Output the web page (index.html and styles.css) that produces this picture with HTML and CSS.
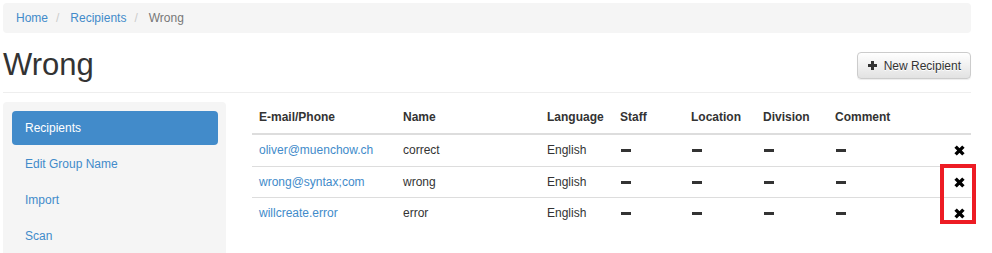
FILE: index.html
```html
<!DOCTYPE html>
<html>
<head>
<meta charset="utf-8">
<title>Wrong</title>
<link rel="stylesheet" href="styles.css">
</head>
<body>
<div class="page">
  <ol class="breadcrumb">
    <li><a href="#">Home</a></li>
    <li class="sep">/</li>
    <li><a href="#">Recipients</a></li>
    <li class="sep">/</li>
    <li class="current">Wrong</li>
  </ol>

  <div class="page-header">
    <h1>Wrong</h1>
    <button class="btn">
      <svg class="icon-plus" width="9" height="9" viewBox="0 0 9 9"><rect x="0" y="3" width="9" height="3" fill="#333"/><rect x="3" y="0" width="3" height="9" fill="#333"/></svg>
      <span>New Recipient</span>
    </button>
  </div>

  <div class="main">
    <nav class="sidebar">
      <a class="nav-item active" href="#">Recipients</a>
      <a class="nav-item" href="#">Edit Group Name</a>
      <a class="nav-item" href="#">Import</a>
      <a class="nav-item" href="#">Scan</a>
    </nav>

    <table class="table">
      <colgroup>
        <col class="c-email"><col class="c-name"><col class="c-lang"><col class="c-staff"><col class="c-loc"><col class="c-div"><col class="c-comment"><col class="c-action">
      </colgroup>
      <thead>
        <tr><th>E-mail/Phone</th><th>Name</th><th>Language</th><th>Staff</th><th>Location</th><th>Division</th><th>Comment</th><th></th></tr>
      </thead>
      <tbody>
        <tr>
          <td><a href="#">oliver@muenchow.ch</a></td><td>correct</td><td>English</td>
          <td><span class="dash"></span></td><td><span class="dash"></span></td><td><span class="dash"></span></td><td><span class="dash"></span></td>
          <td class="action"><svg width="11" height="11" viewBox="0 0 11 11"><path d="M1.6 1.6L9.4 9.4M9.4 1.6L1.6 9.4" stroke="#000" stroke-width="3.4"/></svg></td>
        </tr>
        <tr>
          <td><a href="#">wrong@syntax;com</a></td><td>wrong</td><td>English</td>
          <td><span class="dash"></span></td><td><span class="dash"></span></td><td><span class="dash"></span></td><td><span class="dash"></span></td>
          <td class="action"><svg width="11" height="11" viewBox="0 0 11 11"><path d="M1.6 1.6L9.4 9.4M9.4 1.6L1.6 9.4" stroke="#000" stroke-width="3.4"/></svg></td>
        </tr>
        <tr>
          <td><a href="#">willcreate.error</a></td><td>error</td><td>English</td>
          <td><span class="dash"></span></td><td><span class="dash"></span></td><td><span class="dash"></span></td><td><span class="dash"></span></td>
          <td class="action"><svg width="11" height="11" viewBox="0 0 11 11"><path d="M1.6 1.6L9.4 9.4M9.4 1.6L1.6 9.4" stroke="#000" stroke-width="3.4"/></svg></td>
        </tr>
      </tbody>
    </table>
  </div>
</div>
<div class="highlight"></div>
</body>
</html>
```

FILE: styles.css
```css
* { box-sizing: border-box; }
html, body { margin: 0; padding: 0; background: #fff; }
body {
  font-family: "Liberation Sans", Arial, sans-serif;
  font-size: 12px;
  color: #333;
  overflow: hidden;
}
a { color: #428bca; text-decoration: none; }

.page {
  width: 968px;
  margin: 3px 0 0 3px;
}

.breadcrumb {
  list-style: none;
  margin: 0;
  height: 30px;
  padding: 0 13px;
  display: flex;
  align-items: center;
  background: #f5f5f5;
  border-radius: 4px;
  line-height: 17px;
}
.breadcrumb .sep { color: #ccc; margin: 0 11px 0 8px; }
.breadcrumb .current { color: #777; }

.page-header {
  margin-top: 15px;
  display: flex;
  justify-content: space-between;
  align-items: flex-start;
  padding-bottom: 10px;
  border-bottom: 1px solid #eee;
}
.page-header h1 {
  margin: 0;
  font-size: 31px;
  line-height: 34px;
  font-weight: normal;
  color: #333;
}
.btn {
  margin-top: 4px;
  height: 27px;
  padding: 0 9px 0 10px;
  display: flex;
  align-items: center;
  gap: 7px;
  white-space: nowrap;
  font-family: inherit;
  font-size: 12px;
  color: #333;
  border: 1px solid #ccc;
  border-radius: 4px;
  background: linear-gradient(to bottom, #fff 0%, #e2e2e2 100%);
  box-shadow: 0 1px 1px rgba(0,0,0,.075);
  text-shadow: 0 1px 0 #fff;
}
.icon-plus { flex: none; }

.main {
  margin-top: 9px;
  display: grid;
  grid-template-columns: 223px 1fr;
  column-gap: 26px;
  align-items: start;
}

.sidebar {
  background: #f5f5f5;
  border-radius: 4px;
  padding: 9px 8px 9px 9px;
  display: flex;
  flex-direction: column;
  gap: 2px;
}
.nav-item {
  display: block;
  padding: 8px 13px;
  line-height: 18px;
  border-radius: 4px;
  color: #428bca;
}
.nav-item.active { background: #428bca; color: #fff; }

.table {
  width: 719px;
  border-collapse: collapse;
  table-layout: fixed;
}
.c-email { width: 144px; }
.c-name { width: 144px; }
.c-lang { width: 73px; }
.c-staff { width: 71px; }
.c-loc { width: 72px; }
.c-div { width: 72px; }
.c-comment { width: 100px; }
.c-action { width: 43px; }

.table th, .table td {
  padding: 7px;
  line-height: 16.5px;
  text-align: left;
  vertical-align: middle;
  white-space: nowrap;
}
.table th {
  font-weight: bold;
  border-bottom: 2px solid #ddd;
  padding-top: 7px;
  padding-bottom: 7.5px;
}
.table tbody td { border-top: 1px solid #ddd; }
.table tbody tr:first-child td { border-top: 0; }
.table td.action { text-align: right; padding-right: 6px; }
.table td.action svg { display: inline-block; vertical-align: middle; }

.dash {
  display: inline-block;
  width: 10px;
  height: 3px;
  background: #333;
  margin-left: 1px;
  vertical-align: middle;
}

.highlight {
  position: absolute;
  left: 940px;
  top: 164px;
  width: 36px;
  height: 60px;
  border: 4px solid #ed1c24;
}
```
